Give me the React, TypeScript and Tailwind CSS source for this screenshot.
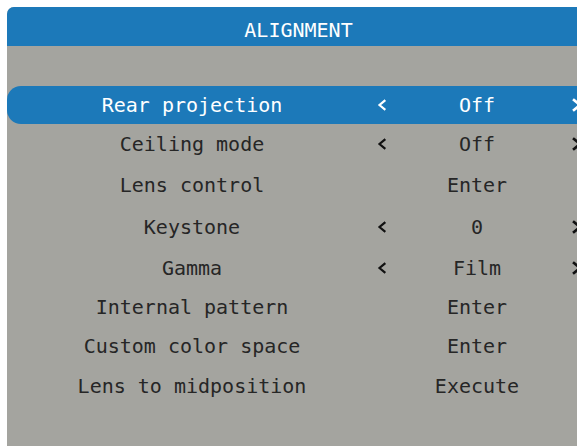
import React from 'react';

type Row = {
  label: string;
  value: string;
  arrows: boolean;
  h: string;
};

const rows: Row[] = [
  { label: 'Rear projection', value: 'Off', arrows: true, h: 'h-[38px]' },
  { label: 'Ceiling mode', value: 'Off', arrows: true, h: 'h-[40px]' },
  { label: 'Lens control', value: 'Enter', arrows: false, h: 'h-[42px]' },
  { label: 'Keystone', value: '0', arrows: true, h: 'h-[42px]' },
  { label: 'Gamma', value: 'Film', arrows: true, h: 'h-[39px]' },
  { label: 'Internal pattern', value: 'Enter', arrows: false, h: 'h-[39px]' },
  { label: 'Custom color space', value: 'Enter', arrows: false, h: 'h-[40px]' },
  { label: 'Lens to midposition', value: 'Execute', arrows: false, h: 'h-[40px]' },
];

const Chevron = ({ dir }: { dir: 'left' | 'right' }) => (
  <svg width="12" height="14" viewBox="0 0 12 14" fill="none" stroke="currentColor" strokeWidth={2.6} strokeLinecap="square">
    {dir === 'left' ? <polyline points="9,2 3,7 9,12" /> : <polyline points="3,2 9,7 3,12" />}
  </svg>
);

const App: React.FC = () => {
  return (
    <div className="w-[577px] h-[446px] overflow-hidden bg-white pl-[7px] pt-[7px]">
      <div
        className="w-[620px] h-[460px] bg-[#a4a49f] rounded-tl-[7px] overflow-hidden"
        style={{ fontFamily: '"DejaVu Sans Mono", "Liberation Mono", monospace' }}
      >
        {/* Header */}
        <div className="h-[39px] bg-[#1c79b9] flex items-center pt-[6px]">
          <div className="w-[583px] text-center text-white text-[20px]">ALIGNMENT</div>
        </div>

        <div className="h-[40px]" />

        {rows.map((r, i) => {
          const active = i === 0;
          return (
            <div
              key={r.label}
              className={`${r.h} flex items-center text-[20px] ${
                active ? 'bg-[#1c79b9] text-white rounded-l-[14px]' : 'text-[#262626]'
              }`}
            >
              <div className="w-[370px] shrink-0 text-center whitespace-pre">{r.label}</div>
              <div className={`w-[10px] shrink-0 flex justify-center ${active ? 'text-white' : 'text-[#111]'}`}>
                {r.arrows && <Chevron dir="left" />}
              </div>
              <div className="w-[180px] shrink-0 text-center">{r.value}</div>
              <div className={`w-[20px] shrink-0 flex justify-center ${active ? 'text-white' : 'text-[#111]'}`}>
                {r.arrows && <Chevron dir="right" />}
              </div>
            </div>
          );
        })}
      </div>
    </div>
  );
};

export default App;
